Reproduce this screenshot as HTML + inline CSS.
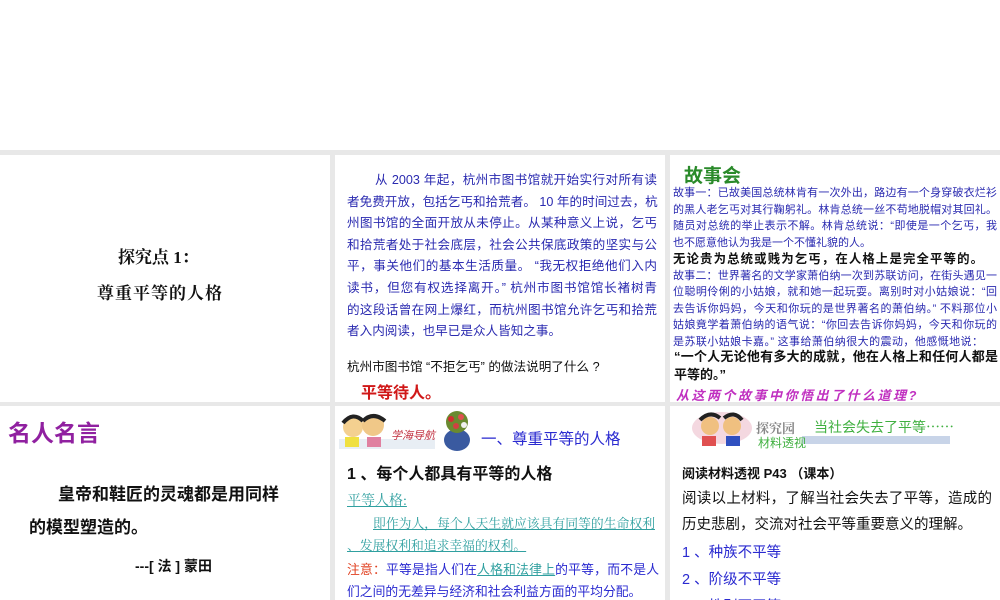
<!DOCTYPE html>
<html><head><meta charset="utf-8"><style>
*{margin:0;padding:0;box-sizing:border-box}
body{width:1000px;height:600px;background:#fff;position:relative;overflow:hidden;font-family:"Liberation Sans","Noto Sans CJK SC",sans-serif}
.g{position:absolute;background:#e8e8e8}
.p{position:absolute;background:#fff;overflow:hidden}
.a{position:absolute;white-space:nowrap}
.serif{font-family:"Liberation Serif","Noto Serif CJK SC",serif}
.j{display:block;white-space:nowrap;text-align:justify;text-align-last:justify}
.l{display:block;white-space:nowrap}
</style></head><body>
<div class="g" style="left:0;top:150px;width:1000px;height:450px"></div>
<div class="p" style="left:0;top:155px;width:330px;height:247px">
 <div class="a serif" style="left:118px;top:88px;font-size:17px;font-weight:bold;color:#111">探究点 1：</div>
 <div class="a serif" style="left:97px;top:124px;font-size:17px;font-weight:bold;color:#111;letter-spacing:1px">尊重平等的人格</div>
</div>
<div class="p" style="left:335px;top:155px;width:330px;height:247px">
 <div style="position:absolute;left:12px;top:15px;width:310px;font-size:12.6px;line-height:21.6px;color:#2a2ab0">
  <span class="j" style="padding-left:28px">从 2003 年起，杭州市图书馆就开始实行对所有读</span>
  <span class="j">者免费开放，包括乞丐和拾荒者。 10 年的时间过去，杭</span>
  <span class="j">州图书馆的全面开放从未停止。从某种意义上说，乞丐</span>
  <span class="j">和拾荒者处于社会底层，社会公共保底政策的坚实与公</span>
  <span class="j">平，事关他们的基本生活质量。 “我无权拒绝他们入内</span>
  <span class="j">读书，但您有权选择离开。” 杭州市图书馆馆长褚树青</span>
  <span class="j">的这段话曾在网上爆红，而杭州图书馆允许乞丐和拾荒</span>
  <span class="l">者入内阅读，也早已是众人皆知之事。</span>
 </div>
 <div class="a" style="left:12px;top:201px;font-size:12.6px;color:#111">杭州市图书馆 “不拒乞丐” 的做法说明了什么 ?</div>
 <div class="a" style="left:26px;top:224px;font-size:16px;font-weight:bold;color:#d01818">平等待人。</div>
</div>
<div class="p" style="left:670px;top:155px;width:330px;height:247px">
 <div class="a" style="left:14px;top:6px;font-size:19px;font-weight:bold;color:#2a8a2a">故事会</div>
 <div style="position:absolute;left:3px;top:30px;width:324px;font-size:11px;line-height:16.5px;color:#2a2ab0">
  <span class="j">故事一：已故美国总统林肯有一次外出，路边有一个身穿破衣烂衫</span>
  <span class="j">的黑人老乞丐对其行鞠躬礼。林肯总统一丝不苟地脱帽对其回礼。</span>
  <span class="j">随员对总统的举止表示不解。林肯总统说：“即使是一个乞丐，我</span>
  <span class="l">也不愿意他认为我是一个不懂礼貌的人。</span>
  <span class="j" style="color:#111;font-weight:bold;font-size:12.4px;width:310px">无论贵为总统或贱为乞丐，在人格上是完全平等的。</span>
  <span class="j">故事二：世界著名的文学家萧伯纳一次到苏联访问，在街头遇见一</span>
  <span class="j">位聪明伶俐的小姑娘，就和她一起玩耍。离别时对小姑娘说：“回</span>
  <span class="j">去告诉你妈妈，今天和你玩的是世界著名的萧伯纳。” 不料那位小</span>
  <span class="j">姑娘竟学着萧伯纳的语气说：“你回去告诉你妈妈，今天和你玩的</span>
  <span class="l" style="width:310px;text-align:justify;text-align-last:justify">是苏联小姑娘卡嘉。” 这事给萧伯纳很大的震动，他感慨地说：</span>
 </div>
 <div style="position:absolute;left:4px;top:193px;width:324px;font-size:13px;line-height:18px;font-weight:bold;color:#111">
  <span class="j">“一个人无论他有多大的成就，他在人格上和任何人都是</span>
  <span class="l">平等的。”</span>
 </div>
 <div class="a" style="left:6px;top:230px;font-size:13px;font-weight:bold;font-style:italic;color:#c030c0;letter-spacing:2.5px">从这两个故事中你悟出了什么道理?</div>
</div>
<div class="p" style="left:0;top:406px;width:330px;height:194px">
 <div class="a" style="left:8px;top:8px;font-size:23px;font-weight:bold;color:#9020a0">名人名言</div>
 <div class="a" style="left:58px;top:74px;font-size:17px;font-weight:bold;color:#111">皇帝和鞋匠的灵魂都是用同样</div>
 <div class="a" style="left:29px;top:107px;font-size:17px;font-weight:bold;color:#111">的模型塑造的。</div>
 <div class="a" style="left:135px;top:150px;font-size:14px;font-weight:bold;color:#111">---[ 法 ] 蒙田</div>
</div>
<div class="p" style="left:335px;top:406px;width:330px;height:194px">
 <svg style="position:absolute;left:4px;top:5px" width="100" height="38"><rect x="0" y="28" width="96" height="10" fill="#e8eef4"/><circle cx="14" cy="16" r="10" fill="#f4d090"/><circle cx="34" cy="14" r="11" fill="#f0c888"/><path d="M4 12 Q14 0 24 10 M24 10 Q34 0 46 10" stroke="#222" stroke-width="4" fill="none"/><rect x="6" y="26" width="14" height="10" fill="#f0e040"/><rect x="28" y="26" width="14" height="10" fill="#e080a0"/><text x="52" y="28" font-size="11" fill="#c03040" font-style="italic" font-family="Noto Sans CJK SC,sans-serif">学海导航</text></svg>
 <svg style="position:absolute;left:107px;top:2px" width="30" height="44"><ellipse cx="15" cy="32" rx="13" ry="11" fill="#3a5aa0"/><circle cx="15" cy="14" r="11" fill="#6a8a30"/><circle cx="9" cy="11" r="3" fill="#d03030"/><circle cx="19" cy="9" r="3" fill="#e05050"/><circle cx="14" cy="18" r="3" fill="#d04040"/><circle cx="22" cy="17" r="3" fill="#f0f0f0"/></svg>
 <div class="a" style="left:146px;top:21px;font-size:15.5px;color:#2a2ad0">一、尊重平等的人格</div>
 <div class="a" style="left:12px;top:54px;font-size:16px;font-weight:bold;color:#111">1 、每个人都具有平等的人格</div>
 <div class="a serif" style="left:12px;top:84px;font-size:14px;color:#30a0a0;text-decoration:underline">平等人格:</div>
 <div style="position:absolute;left:12px;top:107px;width:308px;font-size:12.8px;line-height:22px;color:#30a0a0;text-decoration:underline;font-family:'Liberation Serif','Noto Serif CJK SC',serif">
  <span class="j" style="padding-left:26px">即作为人，每个人天生就应该具有同等的生命权利</span>
  <span class="l">、发展权利和追求幸福的权利。</span>
 </div>
 <div style="position:absolute;left:12px;top:153px;width:312px;font-size:12.8px;line-height:22px;color:#2a2ad0">
  <span class="j"><span style="color:#e04020">注意：</span>平等是指人们在<span style="color:#30a0a0;text-decoration:underline">人格和法律上</span>的平等，而不是人</span>
  <span class="l">们之间的无差异与经济和社会利益方面的平均分配。</span>
 </div>
</div>
<div class="p" style="left:670px;top:406px;width:330px;height:194px">
 <svg style="position:absolute;left:22px;top:4px" width="262" height="40"><rect x="110" y="26" width="148" height="8" fill="#c8d4e8"/><ellipse cx="30" cy="18" rx="30" ry="16" fill="#f4d8e0"/><circle cx="18" cy="16" r="9" fill="#f0c080"/><circle cx="40" cy="16" r="9" fill="#f0c080"/><path d="M8 10 Q18 0 28 8 M32 8 Q42 0 50 10" stroke="#222" stroke-width="4" fill="none"/><rect x="10" y="26" width="14" height="10" fill="#e05050"/><rect x="34" y="26" width="14" height="10" fill="#3050c0"/><text x="64" y="23" font-size="13" font-weight="bold" fill="#888" font-family="Noto Serif CJK SC,serif">探究园</text><text x="66" y="37" font-size="12" fill="#40b040" font-family="Noto Sans CJK SC,sans-serif">材料透视</text><text x="122" y="22" font-size="14" fill="#40b040" font-family="Noto Sans CJK SC,sans-serif">当社会失去了平等……</text></svg>
 <div class="a" style="left:12px;top:57px;font-size:13px;font-weight:bold;color:#111">阅读材料透视 P43 （课本）</div>
 <div style="position:absolute;left:12px;top:80px;width:310px;font-size:14.5px;line-height:26px;color:#111">
  <span class="j">阅读以上材料，了解当社会失去了平等，造成的</span>
  <span class="l">历史悲剧，交流对社会平等重要意义的理解。</span>
 </div>
 <div class="a" style="left:12px;top:135px;font-size:14.5px;color:#2a2ad0">1 、种族不平等</div>
 <div class="a" style="left:12px;top:162px;font-size:14.5px;color:#2a2ad0">2 、阶级不平等</div>
 <div class="a" style="left:12px;top:189px;font-size:14.5px;color:#2a2ad0">3 、性别不平等</div>
</div>
</body></html>
